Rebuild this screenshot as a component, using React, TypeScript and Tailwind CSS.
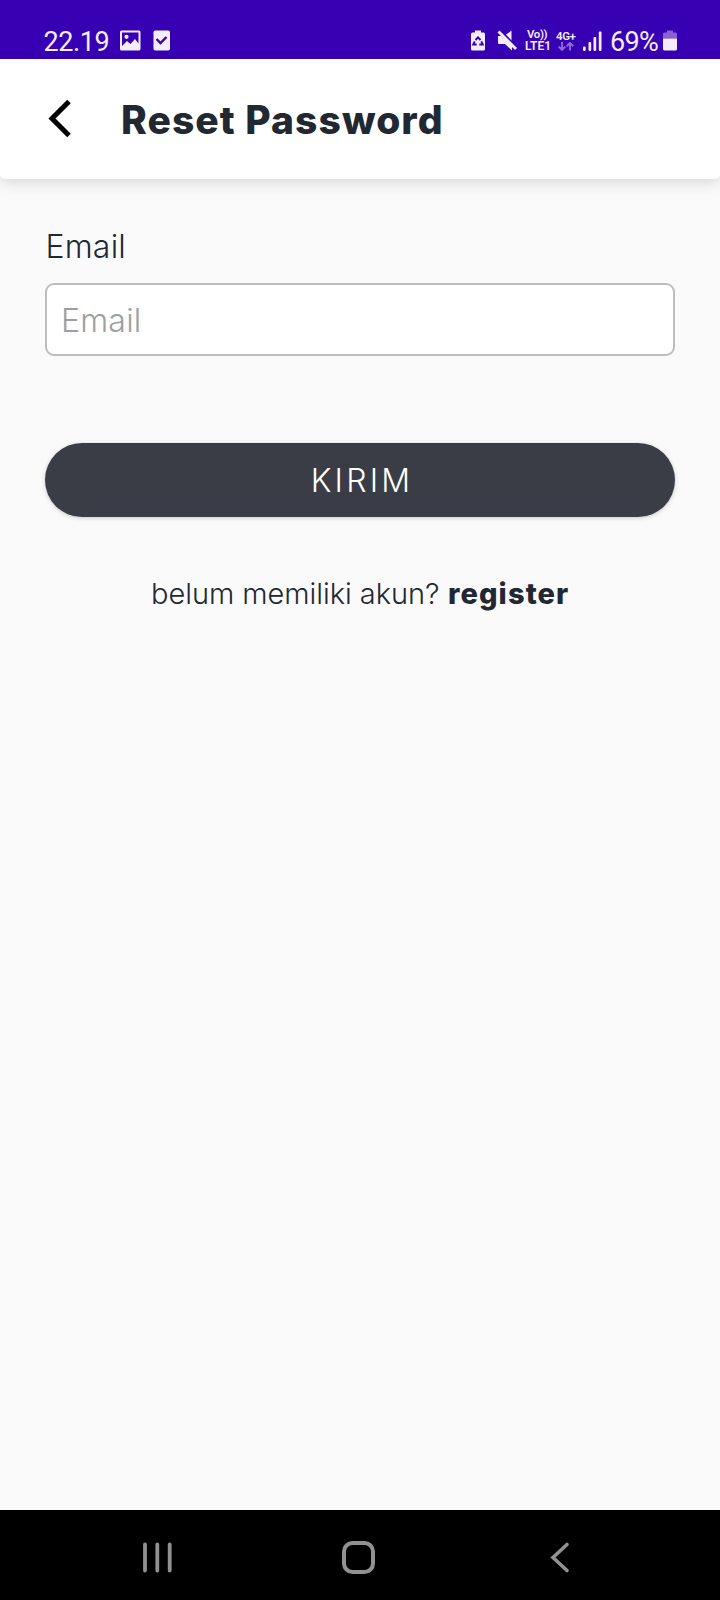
import React from "react";

function StatusBar() {
  return (
    <div className="flex h-[58.5px] shrink-0 items-start bg-[#3700b3] pl-[43.5px] pt-[27px] font-['Roboto',sans-serif] text-[#f3edff]">
      <span className="w-[76.5px] text-[27px] leading-[31px] tracking-[-0.4px]">22.19</span>
      <svg className="h-[31px] w-[52px]" viewBox="120 26.5 52 31" fill="none">
        <rect x="120" y="30" width="20.500" height="20" rx="1.500" fill="#f3edff" />
        <path fill="#3700b3" d="M122 32H138.500V43L135 38.500L130.500 43.500L127 40.500L122 45.500Z" />
        <circle cx="126.500" cy="36.300" r="2.100" fill="#f3edff" />
        <rect x="153.500" y="30" width="16.500" height="20" rx="1.800" fill="#f3edff" />
        <path d="M156.500 38.500L160.500 42.500L166.500 36.500" stroke="#3700b3" strokeWidth="2.400" />
      </svg>
      <svg className="ml-[296px] h-[31px] w-[52px]" viewBox="468 26.5 52 31" fill="none">
        <path fill="#f3edff" d="M475 30H481V32H483.500Q485 32 485 33.500V48.500Q485 50 483.500 50H472.500Q471 50 471 48.500V33.500Q471 32 472.500 32H475Z" />
        <path d="M475.500 39.500L478 36.800L480.500 39.500M481.300 40.800L482.800 44H479.300M476.700 44H473.200L474.700 40.800" stroke="#3700b3" strokeWidth="1.900" />
        <path fill="#f3edff" d="M498 35.500H502L512 45V50L505 43.500H499Q498 43.500 498 42.500ZM505.500 34.500L511.500 30V42L505.500 36.500Z" />
        <path d="M500 29.500L517.500 47.500" stroke="#3700b3" strokeWidth="2" />
        <path d="M498.500 31L516 48.500" stroke="#f3edff" strokeWidth="2.800" />
      </svg>
      <div className="ml-[5px] flex w-[31px] flex-col pt-px font-semibold">
        <span className="pl-[2px] text-[11.5px] leading-[12px] tracking-[-0.4px]">Vo))</span>
        <span className="text-[12px] leading-[12px]">LTE1</span>
      </div>
      <div className="flex w-[24px] flex-col pt-[2.5px]">
        <span className="text-[11.5px] font-semibold leading-[12px] tracking-[-0.4px]">4G+</span>
        <svg className="ml-[2px] h-[10px] w-[17px]" viewBox="0 0 17 10" fill="none" stroke="#8f68dc" strokeWidth="1.900">
          <path d="M4 0V8M.7 4.500L4 7.800L7.300 4.500M12 8.500V1M8.700 4.200L12 1L15.300 4.200" />
        </svg>
      </div>
      <svg className="h-[31px] w-[26px]" viewBox="580 26.5 26 31" fill="#f3edff">
        <rect x="583" y="46" width="2.700" height="4.500" rx="1" />
        <rect x="588.500" y="41.500" width="2.700" height="9" rx="1" />
        <rect x="593.500" y="36.500" width="2.700" height="14" rx="1" />
        <rect x="598.800" y="31" width="2.700" height="19.500" rx="1" />
      </svg>
      <span className="ml-[4px] w-[52px] whitespace-nowrap text-[27px] leading-[31px] tracking-[-0.7px]">69%</span>
      <svg className="h-[31px] w-[16px]" viewBox="662 26.5 16 31">
        <path fill="#8a60d4" d="M667 30H673V32H675.500Q677 32 677 33.500V38H663V33.500Q663 32 664.500 32H667Z" />
        <path fill="#f3edff" d="M663 38H677V48.500Q677 50 675.500 50H664.500Q663 50 663 48.500Z" />
      </svg>
    </div>
  );
}

function NavBar() {
  return (
    <nav className="flex h-[90px] shrink-0 items-center justify-between bg-black pl-[142px] pr-[149px] pt-1.5">
      <svg className="h-[34px] w-[31px]" viewBox="0 0 31 34" stroke="#919191" strokeWidth="3.800" strokeLinecap="round">
        <path d="M3 3.500V29.500M15.300 3.500V29.500M27.700 3.500V29.500" />
      </svg>
      <svg className="mr-1 h-[34px] w-[34px]" viewBox="0 0 34 34" fill="none" stroke="#919191" strokeWidth="4">
        <rect x="2" y="2" width="29" height="29" rx="8.500" />
      </svg>
      <svg className="h-[34px] w-[22px]" viewBox="0 0 22 34" fill="none" stroke="#919191" strokeWidth="3.600" strokeLinecap="round">
        <path d="M18 3.500L4 16.500L18 29.500" />
      </svg>
    </nav>
  );
}

export default function App() {
  return (
    <div className="flex h-[1600px] w-[720px] flex-col overflow-hidden bg-[#fafafa] font-['Inter',sans-serif] text-[#222832]">
      <StatusBar />
      <header className="flex h-[120px] shrink-0 items-center rounded-b-[5px] bg-white pl-[46px] shadow-[0_4px_14px_rgba(0,0,0,0.13)]">
        <svg className="h-[40px] w-[28px]" viewBox="0 0 28 40" fill="none" stroke="#000" strokeWidth="5">
          <path d="M23 2.500L6 19.500L23 36.500" />
        </svg>
        <h1 className="ml-[47px] mt-[3px] whitespace-nowrap text-[39px] font-extrabold leading-[48px] tracking-[1.05px]">Reset Password</h1>
      </header>
      <main className="flex flex-1 flex-col px-[45px] pt-[48.5px]">
        <label htmlFor="email" className="pl-[0.5px] text-[32px] font-light leading-[40px] tracking-[0.2px]">Email</label>
        <input
          id="email"
          placeholder="Email"
          className="mt-[16px] h-[73px] w-full shrink-0 rounded-[9px] border-2 border-[#bdbdbd] bg-white pl-[14px] pt-px text-[32px] font-light tracking-[0.2px] outline-none placeholder:text-[#9e9e9e]"
        />
        <button className="mt-[86.5px] h-[74px] w-full shrink-0 rounded-full bg-[#3a3d46] pl-[4px] pt-[2px] text-[32px] font-light tracking-[3.2px] text-white shadow-[0_1px_4px_rgba(0,0,0,0.2)]">
          KIRIM
        </button>
        <p className="mt-[57.5px] flex whitespace-nowrap pl-[106px] text-[29px] leading-[40px]">
          <span className="w-[297px] font-light tracking-[-0.05px]">belum memiliki akun?</span>
          <a className="font-extrabold tracking-[1.1px]">register</a>
        </p>
      </main>
      <NavBar />
    </div>
  );
}
